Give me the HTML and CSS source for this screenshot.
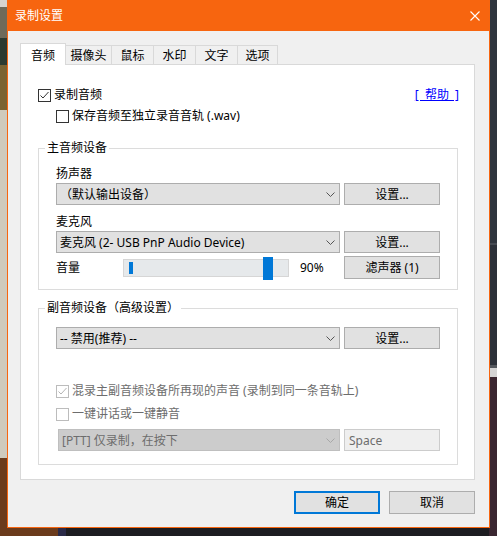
FILE: index.html
```html
<!DOCTYPE html>
<html lang="zh">
<head>
<meta charset="utf-8">
<title>录制设置</title>
<link rel="stylesheet" href="styles.css">
</head>
<body>
<div class="window">
  <div class="titlebar">
    <span class="title">录制设置</span>
    <svg class="close" width="10" height="10" viewBox="0 0 10 10"><path d="M0.5 0.5L9.5 9.5M9.5 0.5L0.5 9.5" stroke="#fff" stroke-width="1.1" fill="none"/></svg>
  </div>
  <div class="tabs">
    <div class="tab active w46">音频</div>
    <div class="tab w47">摄像头</div>
    <div class="tab w43">鼠标</div>
    <div class="tab w43">水印</div>
    <div class="tab w43">文字</div>
    <div class="tab w41">选项</div>
  </div>
  <div class="panel">
    <div class="row-top">
      <label class="check">
        <svg class="box" width="13" height="13" viewBox="0 0 13 13"><rect x="0.5" y="0.5" width="12" height="12" fill="#fff" stroke="#333"/><path d="M2.5 6.5L5 9L10.5 3" stroke="#333" stroke-width="1" fill="none"/></svg>
        <span>录制音频</span>
      </label>
      <a class="help" href="#">[ 帮助 ]</a>
    </div>
    <label class="check sub">
      <svg class="box" width="13" height="13" viewBox="0 0 13 13"><rect x="0.5" y="0.5" width="12" height="12" fill="#fff" stroke="#333"/></svg>
      <span>保存音频至独立录音音轨 (.wav)</span>
    </label>

    <fieldset class="group g1">
      <legend>主音频设备</legend>
      <div class="inner">
        <div class="label first">扬声器</div>
        <div class="line">
          <div class="combo"><span>（默认输出设备）</span><svg class="chev" width="9" height="5" viewBox="0 0 9 5"><path d="M0.5 0.5L4.5 4.5L8.5 0.5" stroke="#555" fill="none"/></svg></div>
          <div class="btn">设置...</div>
        </div>
        <div class="label mic">麦克风</div>
        <div class="line">
          <div class="combo"><span>麦克风 (2- USB PnP Audio Device)</span><svg class="chev" width="9" height="5" viewBox="0 0 9 5"><path d="M0.5 0.5L4.5 4.5L8.5 0.5" stroke="#555" fill="none"/></svg></div>
          <div class="btn">设置...</div>
        </div>
        <div class="volume">
          <span class="vlabel">音量</span>
          <div class="slider">
            <span class="level"></span>
            <span class="thumb"></span>
          </div>
          <span class="pct">90%</span>
          <div class="btn tall">滤声器 (1)</div>
        </div>
      </div>
    </fieldset>

    <fieldset class="group g2">
      <legend>副音频设备（高级设置）</legend>
      <div class="inner">
        <div class="line first2">
          <div class="combo"><span>-- 禁用(推荐) --</span><svg class="chev" width="9" height="5" viewBox="0 0 9 5"><path d="M0.5 0.5L4.5 4.5L8.5 0.5" stroke="#555" fill="none"/></svg></div>
          <div class="btn">设置...</div>
        </div>
        <label class="check disabled mix">
          <svg class="box" width="13" height="13" viewBox="0 0 13 13"><rect x="0.5" y="0.5" width="12" height="12" fill="#fff" stroke="#bcbcbc"/><path d="M2.5 6.5L5 9L10.5 3" stroke="#b4b4b4" stroke-width="1" fill="none"/></svg>
          <span>混录主副音频设备所再现的声音 (录制到同一条音轨上)</span>
        </label>
        <label class="check disabled ptt">
          <svg class="box" width="13" height="13" viewBox="0 0 13 13"><rect x="0.5" y="0.5" width="12" height="12" fill="#fff" stroke="#bcbcbc"/></svg>
          <span>一键讲话或一键静音</span>
        </label>
        <div class="line last">
          <div class="combo off"><span>[PTT] 仅录制，在按下</span><svg class="chev" width="9" height="5" viewBox="0 0 9 5"><path d="M0.5 0.5L4.5 4.5L8.5 0.5" stroke="#a8a8a8" fill="none"/></svg></div>
          <div class="textbox">Space</div>
        </div>
      </div>
    </fieldset>
  </div>
  <div class="footer">
    <div class="btn big default">确定</div>
    <div class="btn big">取消</div>
  </div>
</div>
</body>
</html>
```

FILE: styles.css
```css
html, body {
  margin: 0;
  padding: 0;
}
body {
  width: 497px;
  height: 536px;
  overflow: hidden;
  font-family: "Segoe UI", "Noto Sans", "Noto Sans CJK SC", sans-serif;
  font-size: 12px;
  line-height: 16px;
  color: #000;
  background:
    linear-gradient(to bottom, #d6d4cf 0 7px, #6e6a5a 7px 38px, #2c3a30 38px 65px, #7a6332 65px 110px, #cfcabd 110px 458px, #6b3b1c 458px) left top / 7px 100% no-repeat,
    linear-gradient(to bottom, #2f353e 0 243px, #454a52 243px 245px, #2c3139 245px 365px, #53575d 365px 368px, #d4d4d4 368px 377px, #3a2630 377px) right top / 8px 100% no-repeat,
    linear-gradient(to right, #6b3b1c 0 58px, #2a2a48 58px 66px, #1d1d21 66px) left bottom / 100% 8px no-repeat,
    #1d1d21;
}
.window {
  margin-left: 7px;
  width: 483px;
  box-sizing: border-box;
  border: 1px solid #f7650f;
  border-top: none;
  background: #f0f0f0;
}
.titlebar {
  height: 31px;
  background: #f7650f;
  color: #fff;
  display: flex;
  align-items: center;
  justify-content: space-between;
  padding: 0 9px 0 7px;
}
.title {
  font-size: 12px;
  line-height: 16px;
}
.close {
  display: block;
}
.tabs {
  display: flex;
  align-items: flex-end;
  margin: 12px 0 0 12px;
  height: 21px;
}
.tab {
  box-sizing: border-box;
  height: 19px;
  border: 1px solid #d9d9d9;
  border-bottom: none;
  background: #f0f0f0;
  text-align: center;
  padding-top: 2px;
  margin-left: -1px;
  line-height: 16px;
}
.tab:first-child {
  margin-left: 0;
}
.tab.active {
  height: 22px;
  margin-bottom: -1px;
  background: #fff;
  padding-top: 4px;
  position: relative;
  z-index: 1;
}
.w46 { width: 46px; }
.w47 { width: 47px; }
.w43 { width: 43px; }
.w41 { width: 41px; }
.panel {
  margin: 0 14px 0 12px;
  border: 1px solid #d9d9d9;
  background: #fff;
  padding: 22px 16px 14px 17px;
}
.row-top {
  display: flex;
  justify-content: space-between;
  align-items: center;
  height: 16px;
}
.check {
  display: flex;
  align-items: center;
  gap: 3px;
  height: 16px;
}
.check .box {
  display: block;
  flex: none;
}
.check.sub {
  margin: 5px 0 0 18px;
}
.help {
  color: #0000ff;
  text-decoration: underline;
  word-spacing: 3px;
  margin-right: -1px;
}
.group {
  margin: 16px 0 0;
  padding: 0 6px 10px;
  border: 1px solid #dcdcdc;
  min-width: 0;
}
.group.g2 {
  margin-top: 10px;
  padding-bottom: 13px;
}
.group legend {
  padding: 0 2px;
  line-height: 16px;
}
.inner {
  padding: 0 11px;
}
.label.first {
  margin-top: 10px;
}
.label.mic {
  margin-top: 9px;
}
.line {
  display: grid;
  grid-template-columns: 284px 96px;
  column-gap: 4px;
  margin-top: 1px;
}
.line.first2 {
  margin-top: 11px;
}
.line.last {
  margin-top: 7px;
  grid-template-columns: 282px 96px;
  padding-left: 2px;
}
.combo {
  box-sizing: border-box;
  height: 22px;
  border: 1px solid #adadad;
  background: #e1e1e1;
  display: flex;
  align-items: center;
  justify-content: space-between;
  padding: 1px 4px 0 3px;
  white-space: nowrap;
  overflow: hidden;
}
.combo .chev {
  display: block;
  flex: none;
}
.combo.off {
  background: #cccccc;
  border-color: #bfbfbf;
  color: #6d6d6d;
}
.btn {
  box-sizing: border-box;
  height: 22px;
  border: 1px solid #adadad;
  background: #e1e1e1;
  display: flex;
  align-items: center;
  justify-content: center;
  padding-top: 1px;
  white-space: nowrap;
}
.btn.tall {
  height: 23px;
}
.textbox {
  box-sizing: border-box;
  height: 22px;
  border: 1px solid #cccccc;
  background: #efefef;
  color: #6d6d6d;
  display: flex;
  align-items: center;
  padding: 1px 4px 0;
}
.volume {
  display: grid;
  grid-template-columns: 67px 166px 55px 96px;
  align-items: center;
  margin-top: 3px;
}
.slider {
  box-sizing: border-box;
  height: 18px;
  border: 1px solid #d6d6d6;
  background: #e6e9eb;
  position: relative;
}
.level {
  position: absolute;
  left: 5px;
  top: 2px;
  width: 4px;
  height: 12px;
  background: #0078d7;
}
.thumb {
  position: absolute;
  left: 139px;
  top: -3px;
  width: 10px;
  height: 23px;
  background: #0078d7;
}
.pct {
  padding-left: 11px;
}
.check.disabled {
  color: #6d6d6d;
}
.check.mix {
  margin-top: 34px;
}
.check.ptt {
  margin-top: 7px;
}
.footer {
  display: flex;
  justify-content: flex-end;
  gap: 9px;
  margin: 11px 14px 0 0;
  padding-bottom: 13px;
}
.btn.big {
  width: 86px;
  height: 23px;
}
.btn.default {
  border: 2px solid #0078d7;
}
```
